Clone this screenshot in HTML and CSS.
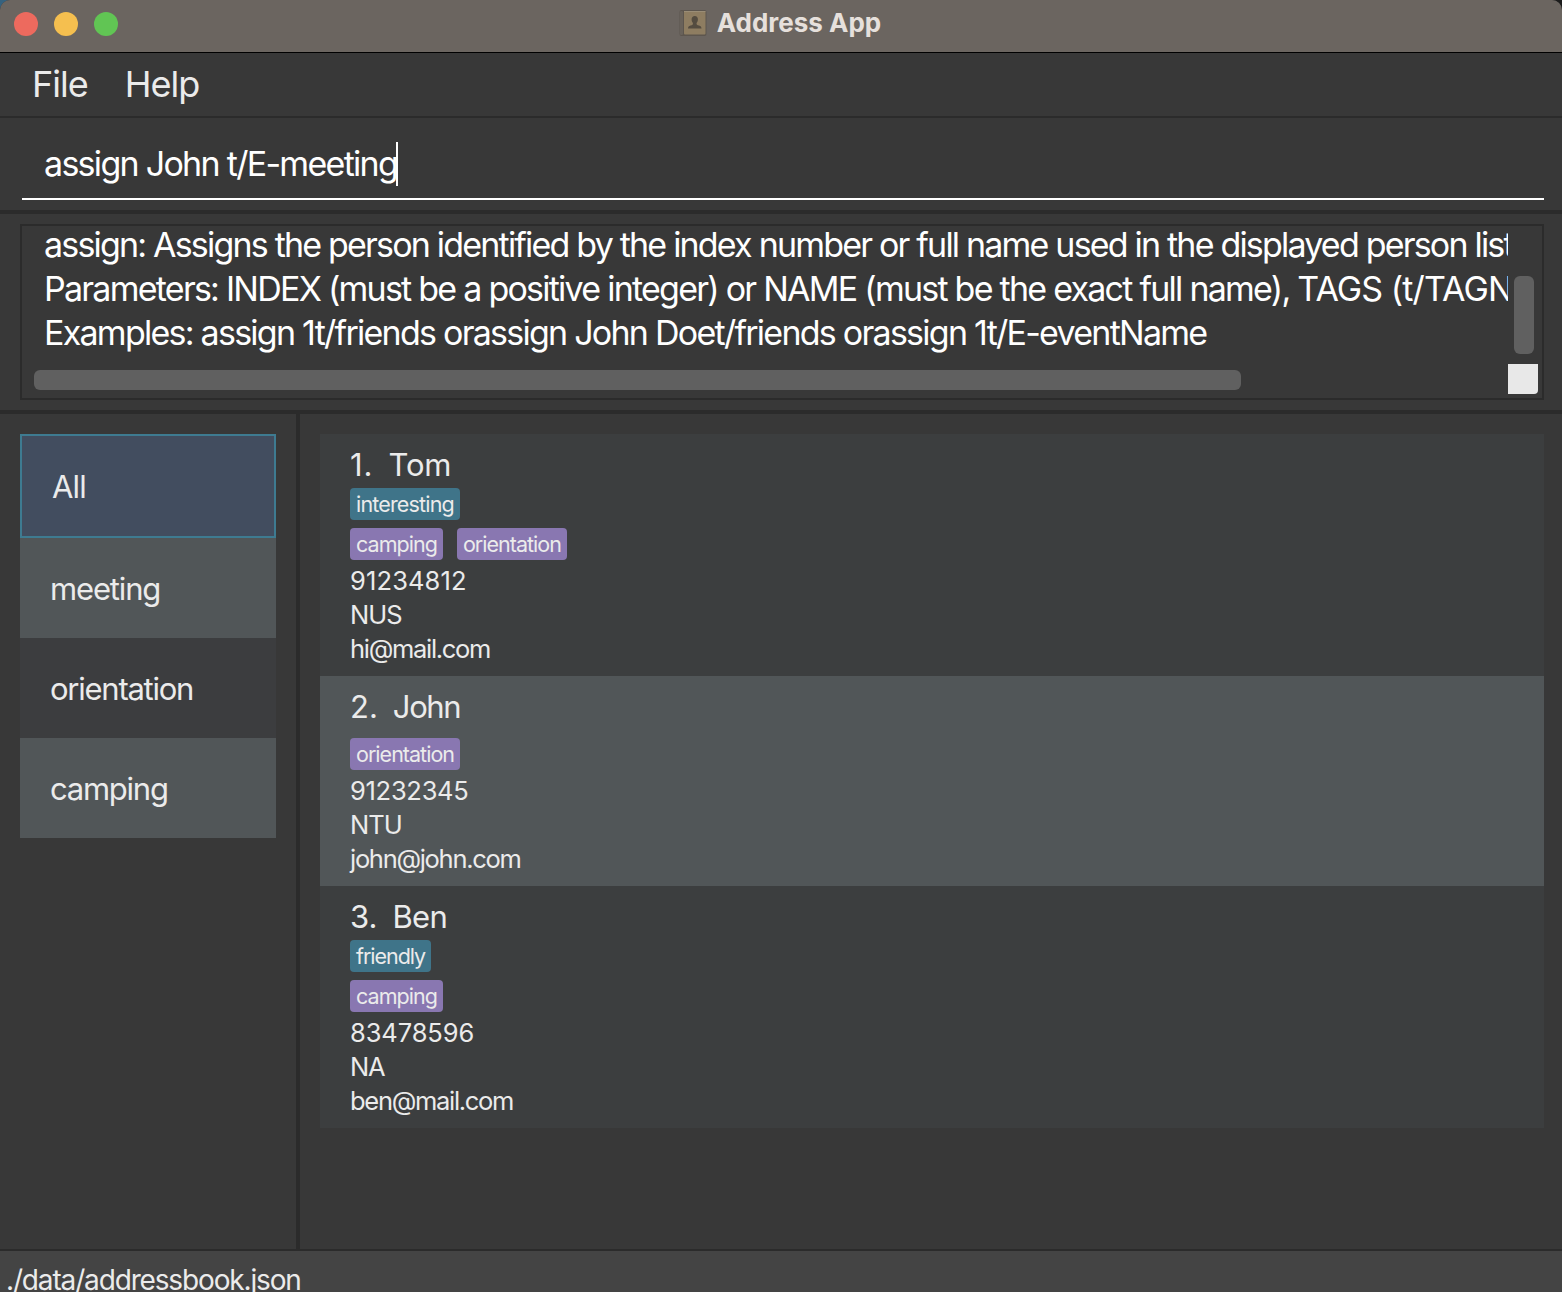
FILE: index.html
```html
<!DOCTYPE html>
<html lang="en">
<head>
<meta charset="utf-8">
<title>Address App</title>
<link rel="stylesheet" href="styles.css">
</head>
<body>
<div class="window">
  <header class="titlebar">
    <div class="lights"><i class="light close"></i><i class="light minimize"></i><i class="light expand"></i></div>
    <div class="title">
      <svg class="book" width="28" height="28" viewBox="0 0 28 28">
        <rect x="0.5" y="1" width="27" height="26" rx="2" fill="#5d564e"/>
        <rect x="1" y="2" width="3" height="24" rx="1" fill="#69625a"/>
        <rect x="5" y="2" width="21.500" height="23.500" rx="1" fill="#8e7d61"/>
        <rect x="5" y="2" width="21.500" height="1" fill="#9a8d76"/>
        <path fill="#544c40" d="M15.800 7c2 0 3.100 1.500 3.100 3.500 0 1.600-.6 2.600-1.300 3.400-.3 1.500.5 2 2.400 2.600 1.700.6 2.500 1.300 2.500 3H9c0-1.700.8-2.400 2.500-3 1.900-.6 2.700-1.100 2.400-2.600-.7-.8-1.300-1.800-1.300-3.400 0-2 1.200-3.500 3.200-3.500z"/>
      </svg>
      <span>Address App</span>
    </div>
  </header>
  <nav class="menubar"><span>File</span><span>Help</span></nav>
  <section class="command">
    <div class="field"><span>assign John t/E-meeting</span><i class="caret"></i></div>
  </section>
  <section class="result">
    <div class="result-box">
      <div class="message">
        <p class="usage">assign: Assigns the person identified by the index number or full name used in the displayed person list</p>
        <p class="params">Parameters: INDEX (must be a positive integer) or NAME (must be the exact full name), <span class="loose">TAGS (t/TAGN</span></p>
        <p class="examples">Examples: assign 1t/friends orassign John Doet/friends orassign 1t/E-eventName</p>
      </div>
      <div class="vbar"><i></i></div>
      <div class="hbar"><i></i></div>
      <div class="corner"></div>
    </div>
  </section>
  <main class="content">
    <aside class="sidebar">
      <ul class="groups">
        <li class="selected">All</li>
        <li class="alt medium">meeting</li>
        <li class="tight">orientation</li>
        <li class="alt tight">camping</li>
      </ul>
    </aside>
    <section class="people">
      <article class="card">
        <h2><span class="one">1.</span><span class="tom">Tom</span></h2>
        <div class="tags"><span class="tag">interesting</span></div>
        <div class="tags events"><span class="tag camp">camping</span><span class="tag narrow">orientation</span></div>
        <p class="wide">91234812</p>
        <p class="upper">NUS</p>
        <p class="mail">hi@mail.com</p>
      </article>
      <article class="card alt">
        <h2><span>2.</span><span class="john">John</span></h2>
        <div class="tags"></div>
        <div class="tags events"><span class="tag narrow">orientation</span></div>
        <p class="digits">91232345</p>
        <p class="upper">NTU</p>
        <p class="mail">john@john.com</p>
      </article>
      <article class="card">
        <h2><span>3.</span><span class="ben">Ben</span></h2>
        <div class="tags"><span class="tag friend">friendly</span></div>
        <div class="tags events"><span class="tag camp">camping</span></div>
        <p>83478596</p>
        <p class="caps">NA</p>
        <p class="mail">ben@mail.com</p>
      </article>
    </section>
  </main>
  <footer class="status">./data/addressbook.json</footer>
</div>
</body>
</html>
```
FILE: styles.css
```css
* { box-sizing: border-box; margin: 0; padding: 0; }
body { background: linear-gradient(90deg, #35627f 50%, #1c1c1c 50%); font-family: Inter, "Liberation Sans", sans-serif; color: #ebebeb; }
i { display: block; }

.window {
  width: 1562px; height: 1292px; overflow: hidden;
  display: flex; flex-direction: column;
  background: #383838; border-radius: 10px 10px 0 0;
}

.titlebar {
  height: 53px; flex: none; padding: 0 16px 7px 14px;
  display: grid; grid-template-columns: 1fr auto 1fr; align-items: center;
  background: #6b6560; border-bottom: 1px solid #000;
}
.lights { display: flex; gap: 16px; padding-top: 3px; }
.light { width: 24px; height: 24px; border-radius: 50%; }
.close { background: #ed6a5e; }
.minimize { background: #f5bf4f; }
.expand { background: #61c554; }
.title {
  display: flex; align-items: center; gap: 10px;
  font-size: 26px; font-weight: 700; line-height: 45px; color: #e6e0dc;
}

.menubar {
  height: 65px; flex: none; padding-left: 32px;
  display: flex; gap: 37px;
  font-size: 36px; line-height: 62px; letter-spacing: -1px;
  border-bottom: 2px solid #2b2b2b;
}

.command { flex: none; padding: 24px 18px 10px 22px; border-bottom: 4px solid #2b2b2b; }
.field {
  height: 58px; padding-left: 22px; display: flex;
  font-size: 34px; line-height: 44px; letter-spacing: -1.71px; color: #fff;
  border-bottom: 2px solid #fff;
}
.caret { width: 2px; height: 44px; margin-left: -1px; background: #fff; }

.result { flex: none; padding: 10px 18px 10px 20px; border-bottom: 4px solid #2b2b2b; }
.result-box {
  height: 176px; padding: 0 4px 4px 10px; border: 2px solid #2b2b2b;
  display: grid; grid-template-columns: minmax(0, 1fr) 30px; grid-template-rows: 138px 30px;
}
.message {
  overflow: hidden; padding-left: 12px;
  font-size: 34px; line-height: 44px; color: #fff; white-space: nowrap;
}
.message p:first-child { margin-top: -3px; }
.usage { letter-spacing: -1.805px; }
.params { letter-spacing: -1.755px; }
.loose { letter-spacing: -.9px; }
.examples { letter-spacing: -1.745px; }
.vbar { padding: 50px 4px 0 6px; }
.vbar i { height: 78px; border-radius: 6px; background: #606060; }
.hbar { padding: 6px 0 0 2px; }
.hbar i { width: 1207px; height: 20px; border-radius: 6px; background: #606060; }
.corner { background: #e8e8e8; border-bottom-right-radius: 4px; }

.content { flex: 1; min-height: 0; display: flex; }
.sidebar { width: 300px; padding: 20px 20px 0; border-right: 4px solid #2b2b2b; }
.groups { list-style: none; font-size: 31px; letter-spacing: -.88px; }
.groups li { height: 100px; padding-left: 30px; line-height: 102px; background: #3c3d3f; }
.groups .alt { background: #515658; }
.groups .medium { letter-spacing: -1.15px; }
.groups .tight { letter-spacing: -1.25px; }
.groups .selected { height: 104px; background: #424d5f; border: 2px solid #3e7b91; }

.people { flex: 1; padding: 20px 18px 0 20px; }
.card { padding: 11px 30px 10px; background: #3c3e3f; }
.card.alt { background: #515658; }
.card h2 { display: flex; gap: 15px; font-size: 31px; font-weight: 400; line-height: 40px; }
.card h2 .one { letter-spacing: 1px; }
.card h2 .tom { letter-spacing: -.2px; }
.card h2 .john { letter-spacing: -1.4px; }
.card h2 .ben { letter-spacing: -.6px; }
.card p { font-size: 25.5px; line-height: 34px; letter-spacing: -.1px; }
.card p.wide { letter-spacing: .13px; }
.card p.digits { letter-spacing: -.28px; }
.card p.upper { letter-spacing: -1px; }
.card p.caps { letter-spacing: -1.2px; }
.card p.mail { letter-spacing: -1.3px; }
.tags { display: flex; gap: 14px; padding-top: 3px; }
.tags.events { padding: 8px 0 4px; }
.tag {
  height: 32px; padding: 0 6px; border-radius: 4px;
  font-size: 21.5px; line-height: 32px; letter-spacing: -.83px; background: #3f7489;
}
.tag.camp { letter-spacing: -.96px; }
.tag.narrow { letter-spacing: -.98px; }
.tag.friend { letter-spacing: -1.04px; }
.events .tag { background: #8977b1; }

.status {
  height: 43px; flex: none; padding-left: 6px; overflow: hidden;
  font-size: 28px; line-height: 58px; letter-spacing: -1.15px;
  background: #444; border-top: 2px solid #2b2b2b;
}
```
